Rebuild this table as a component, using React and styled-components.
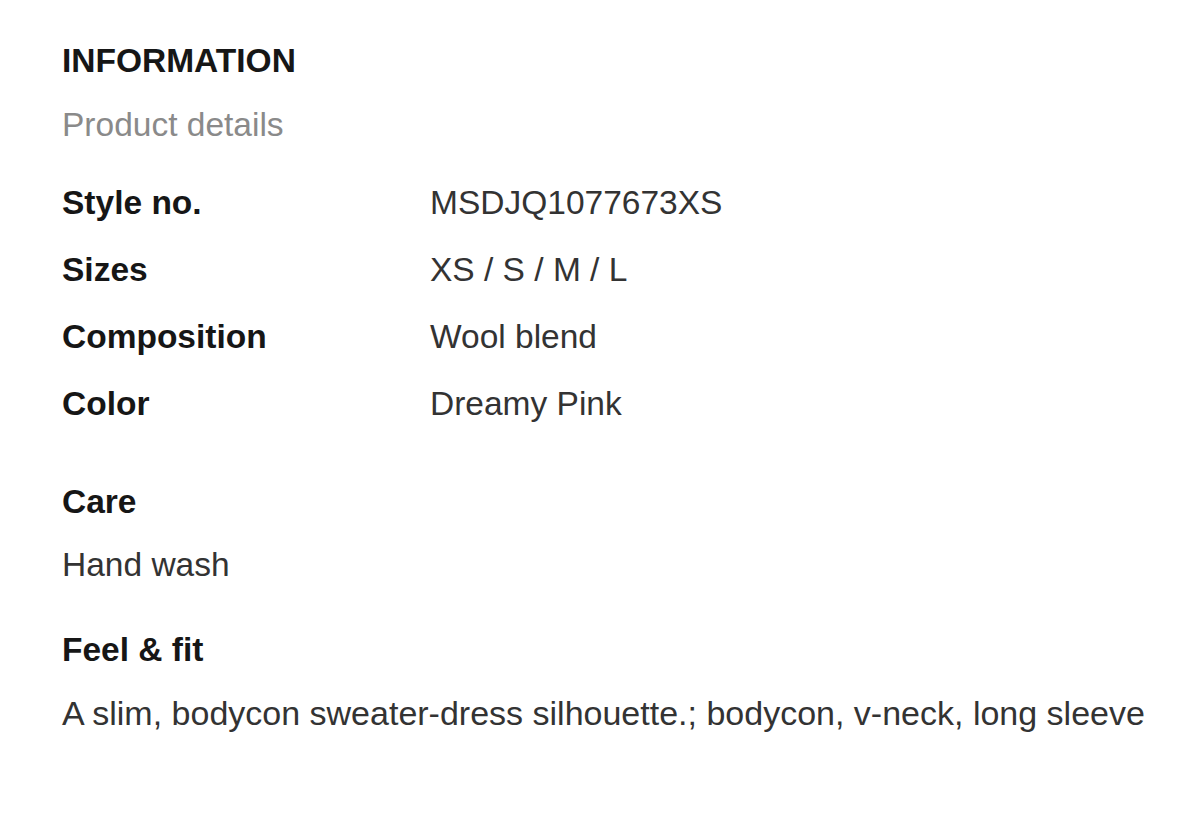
import React from "react";
import styled, { createGlobalStyle } from "styled-components";

const GlobalStyle = createGlobalStyle`
  html, body {
    margin: 0;
    padding: 0;
    background: #fff;
  }
  body {
    font-family: "Liberation Sans", Arial, sans-serif;
  }
`;

const Wrapper = styled.section`
  padding: 41px 62px 0;
  font-size: 33.5px;
  line-height: 40px;
`;

const Title = styled.h2`
  margin: 0;
  font-size: inherit;
  font-weight: 700;
  color: #161616;
`;

const Subtitle = styled.p`
  margin: 24px 0 0;
  color: #8a8a8a;
`;

const Table = styled.dl`
  display: grid;
  grid-template-columns: 368px 1fr;
  margin: 24px 0 0;
  line-height: 67px;
`;

const Label = styled.dt`
  font-weight: 700;
  color: #161616;
`;

const Value = styled.dd`
  margin: 0;
  color: #333;
`;

const Block = styled.div`
  margin-top: 45px;
`;

const BlockTitle = styled.h3`
  margin: 0;
  font-size: inherit;
  font-weight: 700;
  color: #161616;
`;

const BlockText = styled.p`
  margin: 23px 0 0;
  color: #333;
  white-space: nowrap;
  font-size: ${(p) => (p.$wide ? "34px" : "inherit")};
`;

const details = [
  ["Style no.", "MSDJQ1077673XS"],
  ["Sizes", "XS / S / M / L"],
  ["Composition", "Wool blend"],
  ["Color", "Dreamy Pink"],
];

export default function App() {
  return (
    <>
      <GlobalStyle />
      <Wrapper>
        <Title>INFORMATION</Title>
        <Subtitle>Product details</Subtitle>
        <Table>
          {details.map(([k, v]) => (
            <React.Fragment key={k}>
              <Label>{k}</Label>
              <Value>{v}</Value>
            </React.Fragment>
          ))}
        </Table>
        <Block>
          <BlockTitle>Care</BlockTitle>
          <BlockText>Hand wash</BlockText>
        </Block>
        <Block>
          <BlockTitle>Feel &amp; fit</BlockTitle>
          <BlockText $wide>
            A slim, bodycon sweater-dress silhouette.; bodycon, v-neck, long sleeve
          </BlockText>
        </Block>
      </Wrapper>
    </>
  );
}
